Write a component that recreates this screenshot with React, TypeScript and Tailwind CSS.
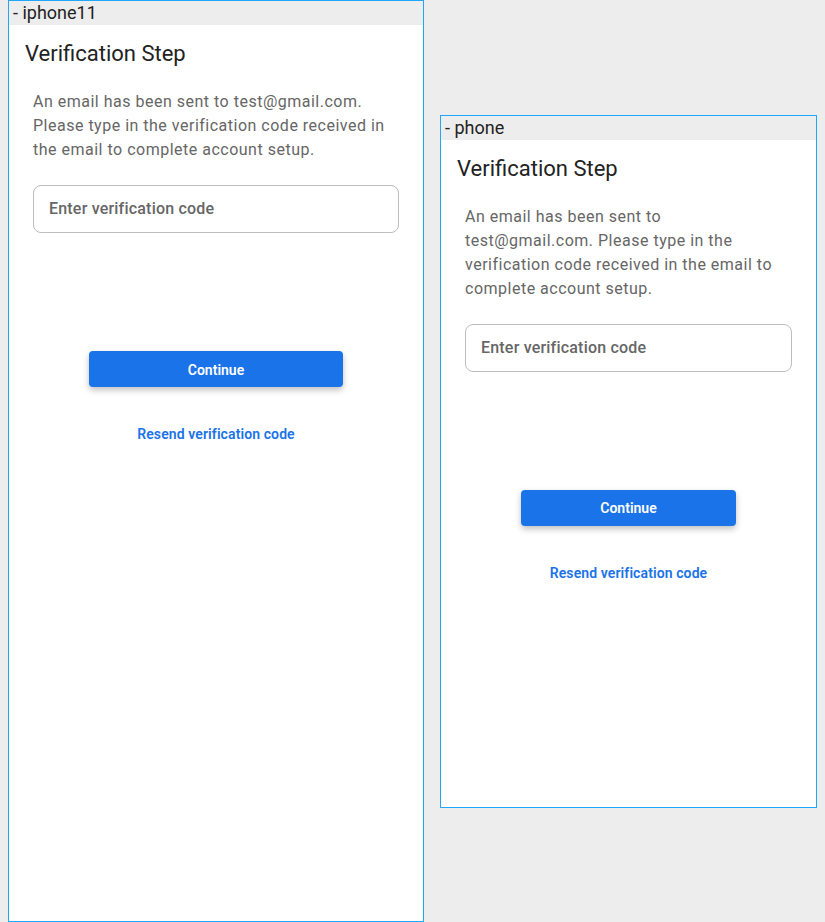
import React from "react";

function Frame({ label, width, height }: { label: string; width: number; height: number }) {
  return (
    <div
      className="flex flex-col border border-[#1ea7fd] bg-white shrink-0"
      style={{ width: width + 2, height: height + 26 }}
    >
      <div className="h-6 bg-[#ededed] pl-1 text-[18px] leading-6 text-[#222]">- {label}</div>
      <div className="flex flex-col">
        <h1 className="mt-[15px] px-4 text-[22px] leading-7 font-normal text-[#222]">Verification Step</h1>
        <p className="mt-[22px] px-6 text-[16px] leading-6 tracking-[0.5px] text-[#666]">
          An email has been sent to test@gmail.com. Please type in the verification code received in the email to complete account setup.
        </p>
        <div className="mx-6 mt-[23px] h-12 rounded-lg border border-[#bdbdbd] pl-[15px] flex items-center">
          <span className="text-[16px] font-medium tracking-[0.2px] text-[#666]">Enter verification code</span>
        </div>
        <button className="mx-20 mt-[118px] h-9 pt-[2px] rounded bg-[#1a73e8] text-white text-[14px] font-semibold shadow-[0_3px_6px_rgba(0,0,0,0.25)]">
          Continue
        </button>
        <div className="mt-[37px] text-center text-[14px] leading-5 font-semibold tracking-[0.1px] text-[#1a73e8]">
          Resend verification code
        </div>
      </div>
    </div>
  );
}

export default function App() {
  return (
    <div
      className="w-[825px] h-[922px] bg-[#ededed] flex items-center gap-4 pl-2"
      style={{ fontFamily: "Roboto, 'Liberation Sans', sans-serif" }}
    >
      <Frame label="iphone11" width={414} height={896} />
      <Frame label="phone" width={375} height={667} />
    </div>
  );
}
